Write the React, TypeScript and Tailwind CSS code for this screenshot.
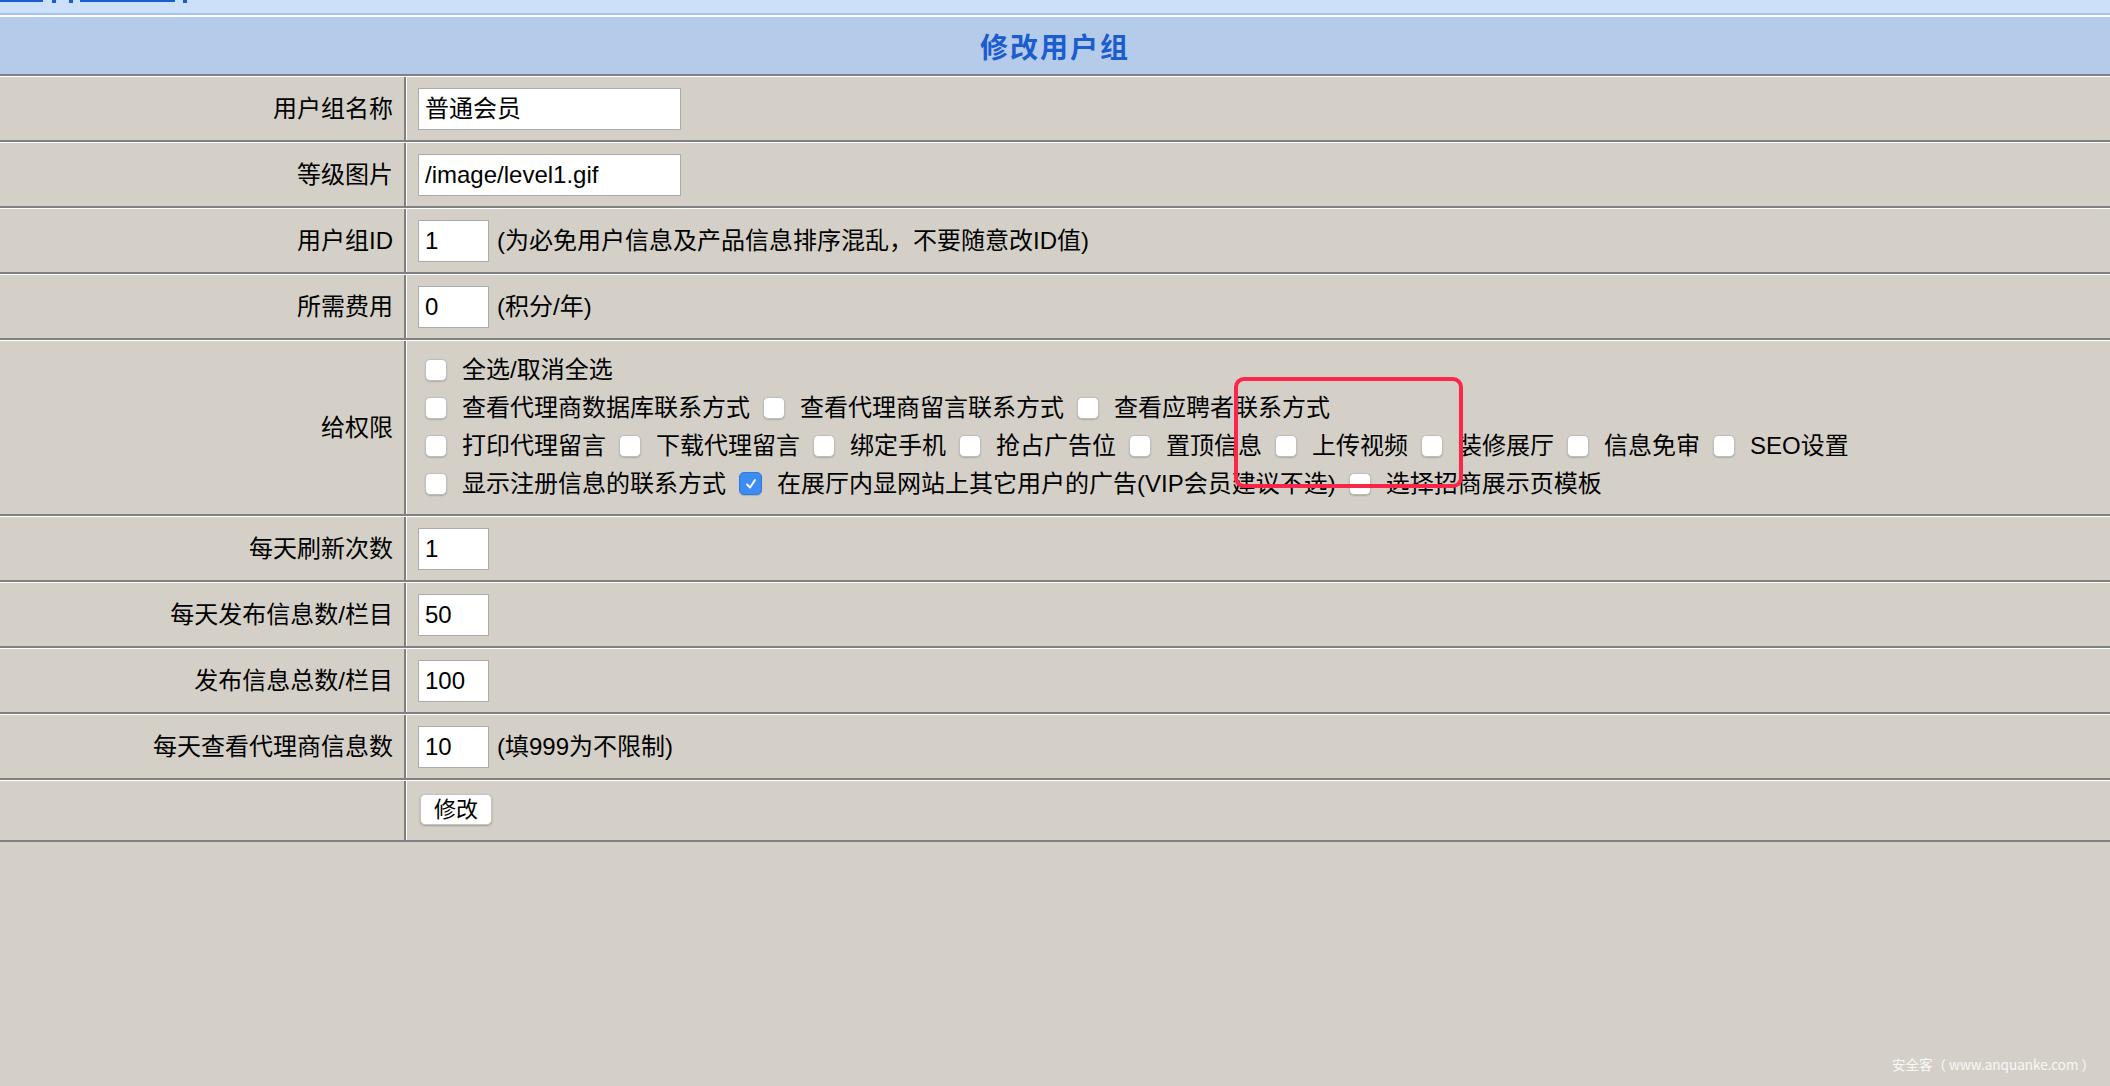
import React from "react";

const FONT = "font-['Liberation_Sans','Noto_Sans_CJK_SC',sans-serif]";

function Box({ checked = false }: { checked?: boolean }) {
  if (checked) {
    return (
      <span className="w-[23px] h-[23px] shrink-0 rounded-[5px] bg-[#3b8cf3] border border-[#2f78dc] flex items-center justify-center shadow-[0_1px_1px_rgba(0,0,0,0.15)]">
        <svg width="14" height="14" viewBox="0 0 14 14" fill="none">
          <path d="M3 7.5 L6 10.5 L11 3" stroke="white" strokeWidth="2" strokeLinecap="round" strokeLinejoin="round" />
        </svg>
      </span>
    );
  }
  return (
    <span className="w-[22px] h-[22px] shrink-0 rounded-[5px] bg-white border border-[#bdbdbd] shadow-[0_1px_1.5px_rgba(0,0,0,0.18)]" />
  );
}

function Item({ label, checked = false, first = false }: { label: string; checked?: boolean; first?: boolean }) {
  return (
    <div className={`flex items-center ${first ? "ml-[7px]" : "ml-[13px]"}`}>
      <Box checked={checked} />
      <span className="ml-[15px] whitespace-nowrap">{label}</span>
    </div>
  );
}

function Input({ value, w }: { value: string; w: string }) {
  return (
    <div className={`${w} h-[42px] bg-white border border-[#ababab] flex items-center pl-[6px] whitespace-nowrap`}>
      {value}
    </div>
  );
}

function Row({ label, h, children }: { label: string; h: string; children?: React.ReactNode }) {
  return (
    <div className="flex border-t border-white border-b-2 border-b-[#808080]">
      <div className={`w-[406px] shrink-0 ${h} border-r-2 border-[#808080] flex items-center justify-end pr-[11px] whitespace-nowrap`}>
        {label}
      </div>
      <div className={`flex-1 ${h} border-l border-white flex items-center pl-[11px]`}>{children}</div>
    </div>
  );
}

export default function App() {
  return (
    <div className={`relative min-h-[1086px] w-[2110px] bg-[#d4d0c8] text-[24px] leading-none text-black ${FONT}`}>
      {/* top strip with cropped links */}
      <div className="h-[13px] bg-[#cde0f9] flex items-start">
        <div className="w-[43px] h-[2px] bg-[#1a5bd0]" />
        <div className="ml-[9px] w-[4px] h-[3px] bg-[#1a5bd0]" />
        <div className="ml-[13px] w-[4px] h-[3px] bg-[#1a5bd0]" />
        <div className="ml-[7px] w-[95px] h-[2px] bg-[#1a5bd0]" />
        <div className="ml-[8px] w-[4px] h-[3px] bg-[#1a5bd0]" />
      </div>
      <div className="h-[2px] bg-[#a7c3ee]" />
      <div className="h-[2px] bg-white" />
      {/* header */}
      <div className="h-[59px] bg-[#b5cbea] border-b-2 border-[#808080] flex items-center justify-center">
        <span className="text-[28px] font-bold tracking-[2px] text-[#1b5ccf] font-['Noto_Sans_CJK_SC',sans-serif]">修改用户组</span>
      </div>

      <Row label="用户组名称" h="h-[63px]">
        <Input value="普通会员" w="w-[263px]" />
      </Row>
      <Row label="等级图片" h="h-[63px]">
        <Input value="/image/level1.gif" w="w-[263px]" />
      </Row>
      <Row label="用户组ID" h="h-[63px]">
        <Input value="1" w="w-[71px]" />
        <span className="ml-[8px] whitespace-nowrap">(为必免用户信息及产品信息排序混乱，不要随意改ID值)</span>
      </Row>
      <Row label="所需费用" h="h-[63px]">
        <Input value="0" w="w-[71px]" />
        <span className="ml-[8px] whitespace-nowrap">(积分/年)</span>
      </Row>
      <Row label="给权限" h="h-[173px]">
        <div className="flex flex-col -mt-[2px]">
          <div className="h-[38px] flex items-center">
            <Item first label="全选/取消全选" />
          </div>
          <div className="h-[38px] flex items-center">
            <Item first label="查看代理商数据库联系方式" />
            <Item label="查看代理商留言联系方式" />
            <Item label="查看应聘者联系方式" />
          </div>
          <div className="h-[38px] flex items-center">
            <Item first label="打印代理留言" />
            <Item label="下载代理留言" />
            <Item label="绑定手机" />
            <Item label="抢占广告位" />
            <Item label="置顶信息" />
            <Item label="上传视频" />
            <Item label="装修展厅" />
            <Item label="信息免审" />
            <Item label="SEO设置" />
          </div>
          <div className="h-[38px] flex items-center">
            <Item first label="显示注册信息的联系方式" />
            <Item checked label="在展厅内显网站上其它用户的广告(VIP会员建议不选)" />
            <Item label="选择招商展示页模板" />
          </div>
        </div>
      </Row>
      <Row label="每天刷新次数" h="h-[63px]">
        <Input value="1" w="w-[71px]" />
      </Row>
      <Row label="每天发布信息数/栏目" h="h-[63px]">
        <Input value="50" w="w-[71px]" />
      </Row>
      <Row label="发布信息总数/栏目" h="h-[63px]">
        <Input value="100" w="w-[71px]" />
      </Row>
      <Row label="每天查看代理商信息数" h="h-[63px]">
        <Input value="10" w="w-[71px]" />
        <span className="ml-[8px] whitespace-nowrap">(填999为不限制)</span>
      </Row>
      <Row label="" h="h-[59px]">
        <button className="ml-[2px] -mt-[2px] w-[72px] h-[31px] bg-white rounded-[5px] border border-[#c4c4c4] shadow-[0_1px_2px_rgba(0,0,0,0.25)] text-[22px] leading-none flex items-center justify-center">
          修改
        </button>
      </Row>

      {/* annotation */}
      <div className="absolute left-[1234px] top-[377px] w-[229px] h-[111px] border-4 border-[#fd2548] rounded-[10px]" />
      {/* watermark */}
      <div className="absolute right-[15px] top-[1058px] text-[13.5px] text-white/85 font-['Noto_Sans_CJK_SC',sans-serif] whitespace-nowrap">
        安全客（ www.anquanke.com ）
      </div>
    </div>
  );
}
